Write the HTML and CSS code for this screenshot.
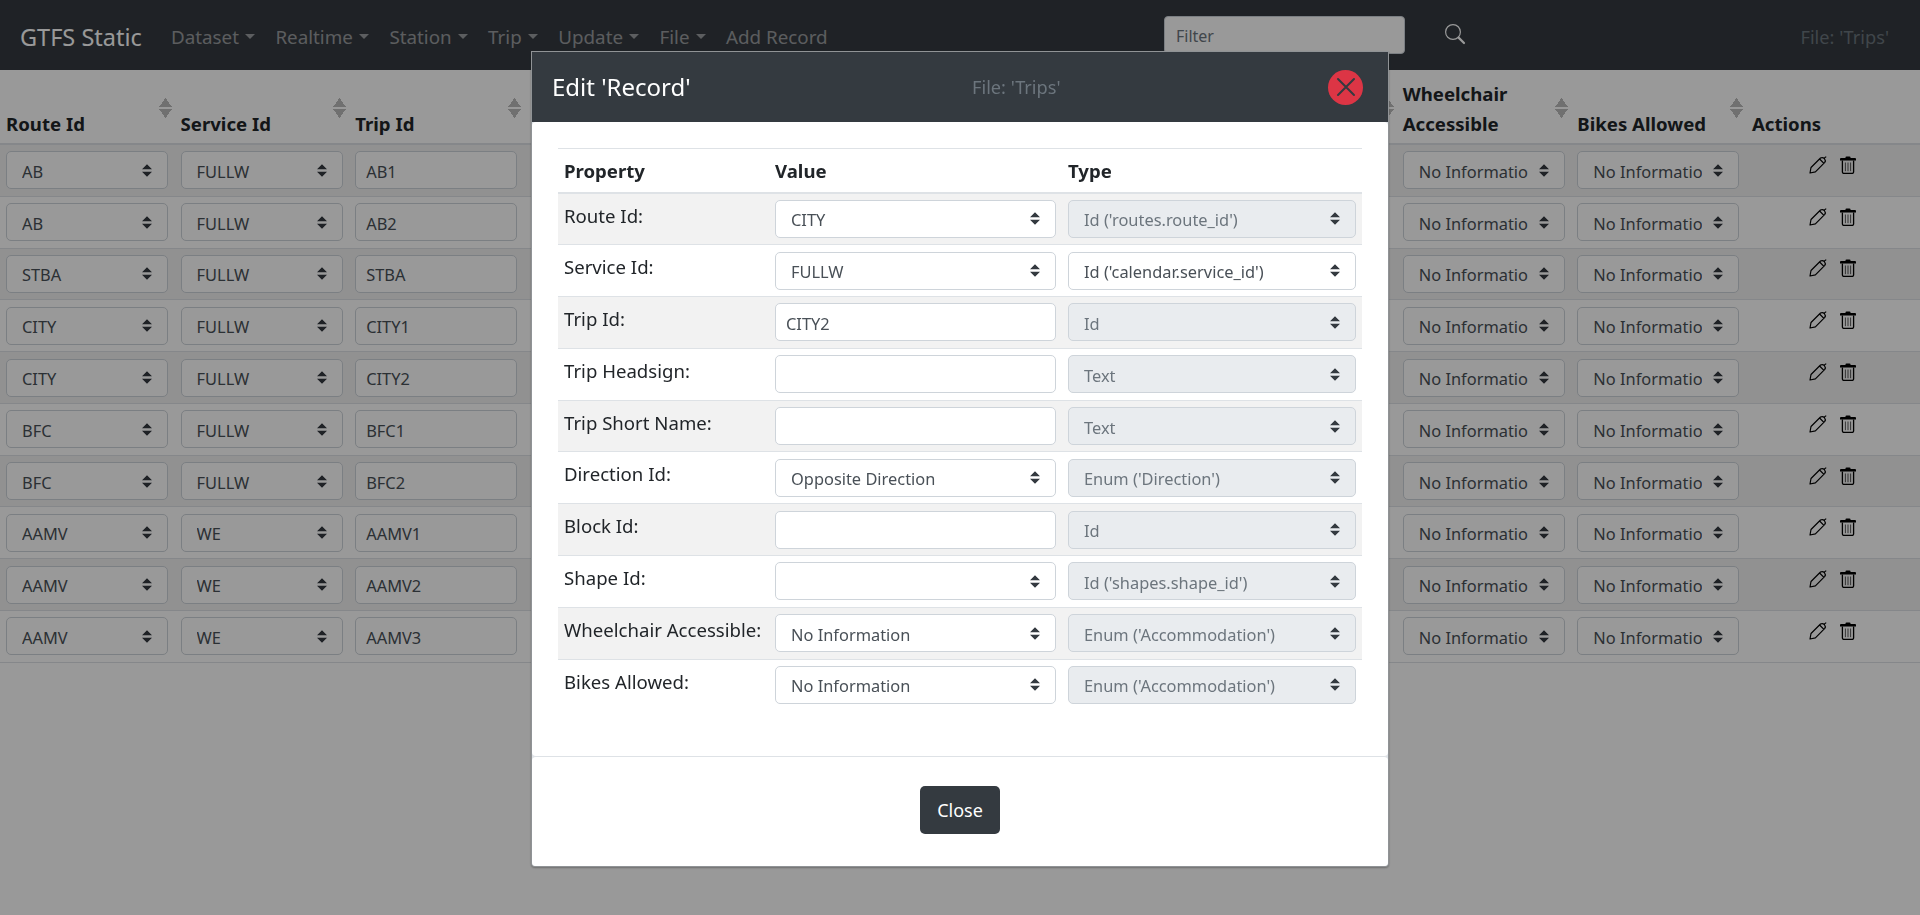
FILE: index.html
```html
<!DOCTYPE html>
<html lang="en">
<head>
  <meta charset="UTF-8">
  <title>GTFS Static</title>
  <link rel="stylesheet" href="styles.css">
</head>
<body>
  <svg class="sprites" width="0" height="0">
    <symbol id="icon-pen" viewBox="0 0 18 18">
      <path d="M1 17 L2 11.5 L11.5 2 Q13.5 0.8 15.4 2.6 Q17 4.6 15.8 6.4 L6.4 15.8 Z M10.6 3 L14.9 7.3 M15 2.4 L17.2 0.6" fill="none" stroke="currentColor" stroke-width="1.2" stroke-linejoin="round"/>
    </symbol>
    <symbol id="icon-trash" viewBox="0 0 16 18">
      <path d="M5.5 1.2 Q5.5 .4 6.5 .4 H9.5 Q10.5 .4 10.5 1.2 V2 H15 Q16 2 16 3 V4.4 H0 V3 Q0 2 1 2 H5.5 Z"/>
      <path d="M2.4 4.4 V16 Q2.4 17.4 3.8 17.4 H12.2 Q13.6 17.4 13.6 16 V4.4" fill="none" stroke="currentColor" stroke-width="1.3"/>
      <path d="M5.4 6.5 V15.2 M8 6.5 V15.2 M10.6 6.5 V15.2" fill="none" stroke="currentColor" stroke-width="1" opacity=".65"/>
    </symbol>
  </svg>

  <nav class="navbar">
    <a class="brand">GTFS Static</a>
    <ul class="nav-list">
      <li class="nav-link dropdown">Dataset</li>
      <li class="nav-link dropdown">Realtime</li>
      <li class="nav-link dropdown">Station</li>
      <li class="nav-link dropdown">Trip</li>
      <li class="nav-link dropdown">Update</li>
      <li class="nav-link dropdown">File</li>
      <li class="nav-link">Add Record</li>
    </ul>
    <input class="filter" type="text" placeholder="Filter">
    <svg class="search-icon" width="22" height="22" viewBox="0 0 22 22">
      <circle cx="9" cy="9" r="7.4" fill="none" stroke="currentColor" stroke-width="1.2"/>
      <path d="M14.6 14.6 L20 20" stroke="currentColor" stroke-width="2.2" stroke-linecap="round"/>
    </svg>
    <span class="nav-file">File: 'Trips'</span>
  </nav>

  <table class="records">
    <colgroup>
      <col class="col-data"><col class="col-data"><col class="col-data"><col class="col-data"><col class="col-data">
      <col class="col-data"><col class="col-data"><col class="col-data"><col class="col-data"><col class="col-data">
      <col>
    </colgroup>
    <thead>
      <tr>
        <th><div class="th-inner"><span>Route Id</span><i class="sort"></i></div></th>
        <th><div class="th-inner"><span>Service Id</span><i class="sort"></i></div></th>
        <th><div class="th-inner"><span>Trip Id</span><i class="sort"></i></div></th>
        <th></th><th></th><th></th><th></th>
        <th><div class="th-inner"><span></span><i class="sort"></i></div></th>
        <th><div class="th-inner"><span>Wheelchair Accessible</span><i class="sort"></i></div></th>
        <th><div class="th-inner"><span>Bikes Allowed</span><i class="sort"></i></div></th>
        <th><div class="th-inner"><span>Actions</span></div></th>
      </tr>
    </thead>
    <tbody>
      <tr>
        <td><select class="field"><option>AB</option></select></td>
        <td><select class="field"><option>FULLW</option></select></td>
        <td><input class="field" type="text" value="AB1"></td>
        <td></td><td></td><td></td><td></td><td></td>
        <td><select class="field"><option>No Information</option></select></td>
        <td><select class="field"><option>No Information</option></select></td>
        <td class="actions"><svg class="pen"><use href="#icon-pen"/></svg><svg class="trash"><use href="#icon-trash"/></svg></td>
      </tr>
      <tr>
        <td><select class="field"><option>AB</option></select></td>
        <td><select class="field"><option>FULLW</option></select></td>
        <td><input class="field" type="text" value="AB2"></td>
        <td></td><td></td><td></td><td></td><td></td>
        <td><select class="field"><option>No Information</option></select></td>
        <td><select class="field"><option>No Information</option></select></td>
        <td class="actions"><svg class="pen"><use href="#icon-pen"/></svg><svg class="trash"><use href="#icon-trash"/></svg></td>
      </tr>
      <tr>
        <td><select class="field"><option>STBA</option></select></td>
        <td><select class="field"><option>FULLW</option></select></td>
        <td><input class="field" type="text" value="STBA"></td>
        <td></td><td></td><td></td><td></td><td></td>
        <td><select class="field"><option>No Information</option></select></td>
        <td><select class="field"><option>No Information</option></select></td>
        <td class="actions"><svg class="pen"><use href="#icon-pen"/></svg><svg class="trash"><use href="#icon-trash"/></svg></td>
      </tr>
      <tr>
        <td><select class="field"><option>CITY</option></select></td>
        <td><select class="field"><option>FULLW</option></select></td>
        <td><input class="field" type="text" value="CITY1"></td>
        <td></td><td></td><td></td><td></td><td></td>
        <td><select class="field"><option>No Information</option></select></td>
        <td><select class="field"><option>No Information</option></select></td>
        <td class="actions"><svg class="pen"><use href="#icon-pen"/></svg><svg class="trash"><use href="#icon-trash"/></svg></td>
      </tr>
      <tr>
        <td><select class="field"><option>CITY</option></select></td>
        <td><select class="field"><option>FULLW</option></select></td>
        <td><input class="field" type="text" value="CITY2"></td>
        <td></td><td></td><td></td><td></td><td></td>
        <td><select class="field"><option>No Information</option></select></td>
        <td><select class="field"><option>No Information</option></select></td>
        <td class="actions"><svg class="pen"><use href="#icon-pen"/></svg><svg class="trash"><use href="#icon-trash"/></svg></td>
      </tr>
      <tr>
        <td><select class="field"><option>BFC</option></select></td>
        <td><select class="field"><option>FULLW</option></select></td>
        <td><input class="field" type="text" value="BFC1"></td>
        <td></td><td></td><td></td><td></td><td></td>
        <td><select class="field"><option>No Information</option></select></td>
        <td><select class="field"><option>No Information</option></select></td>
        <td class="actions"><svg class="pen"><use href="#icon-pen"/></svg><svg class="trash"><use href="#icon-trash"/></svg></td>
      </tr>
      <tr>
        <td><select class="field"><option>BFC</option></select></td>
        <td><select class="field"><option>FULLW</option></select></td>
        <td><input class="field" type="text" value="BFC2"></td>
        <td></td><td></td><td></td><td></td><td></td>
        <td><select class="field"><option>No Information</option></select></td>
        <td><select class="field"><option>No Information</option></select></td>
        <td class="actions"><svg class="pen"><use href="#icon-pen"/></svg><svg class="trash"><use href="#icon-trash"/></svg></td>
      </tr>
      <tr>
        <td><select class="field"><option>AAMV</option></select></td>
        <td><select class="field"><option>WE</option></select></td>
        <td><input class="field" type="text" value="AAMV1"></td>
        <td></td><td></td><td></td><td></td><td></td>
        <td><select class="field"><option>No Information</option></select></td>
        <td><select class="field"><option>No Information</option></select></td>
        <td class="actions"><svg class="pen"><use href="#icon-pen"/></svg><svg class="trash"><use href="#icon-trash"/></svg></td>
      </tr>
      <tr>
        <td><select class="field"><option>AAMV</option></select></td>
        <td><select class="field"><option>WE</option></select></td>
        <td><input class="field" type="text" value="AAMV2"></td>
        <td></td><td></td><td></td><td></td><td></td>
        <td><select class="field"><option>No Information</option></select></td>
        <td><select class="field"><option>No Information</option></select></td>
        <td class="actions"><svg class="pen"><use href="#icon-pen"/></svg><svg class="trash"><use href="#icon-trash"/></svg></td>
      </tr>
      <tr>
        <td><select class="field"><option>AAMV</option></select></td>
        <td><select class="field"><option>WE</option></select></td>
        <td><input class="field" type="text" value="AAMV3"></td>
        <td></td><td></td><td></td><td></td><td></td>
        <td><select class="field"><option>No Information</option></select></td>
        <td><select class="field"><option>No Information</option></select></td>
        <td class="actions"><svg class="pen"><use href="#icon-pen"/></svg><svg class="trash"><use href="#icon-trash"/></svg></td>
      </tr>
    </tbody>
  </table>

  <div class="backdrop"></div>

  <div class="modal">
    <div class="modal-header">
      <h5 class="modal-title">Edit 'Record'</h5>
      <span class="modal-file">File: 'Trips'</span>
      <button class="modal-close">
        <svg width="20" height="20" viewBox="0 0 20 20"><path d="M2 2 L18 18 M18 2 L2 18" stroke="currentColor" stroke-width="2" stroke-linecap="round"/></svg>
      </button>
    </div>
    <div class="modal-body">
      <table class="props">
        <colgroup><col class="col-prop"><col class="col-value"><col></colgroup>
        <thead>
          <tr><th>Property</th><th>Value</th><th>Type</th></tr>
        </thead>
        <tbody>
          <tr>
            <td class="prop-name">Route Id:</td>
            <td><select class="field"><option>CITY</option></select></td>
            <td><select class="field" disabled><option>Id ('routes.route_id')</option></select></td>
          </tr>
          <tr>
            <td class="prop-name">Service Id:</td>
            <td><select class="field"><option>FULLW</option></select></td>
            <td><select class="field"><option>Id ('calendar.service_id')</option></select></td>
          </tr>
          <tr>
            <td class="prop-name">Trip Id:</td>
            <td><input class="field" type="text" value="CITY2"></td>
            <td><select class="field" disabled><option>Id</option></select></td>
          </tr>
          <tr>
            <td class="prop-name">Trip Headsign:</td>
            <td><input class="field" type="text"></td>
            <td><select class="field" disabled><option>Text</option></select></td>
          </tr>
          <tr>
            <td class="prop-name">Trip Short Name:</td>
            <td><input class="field" type="text"></td>
            <td><select class="field" disabled><option>Text</option></select></td>
          </tr>
          <tr>
            <td class="prop-name">Direction Id:</td>
            <td><select class="field"><option>Opposite Direction</option></select></td>
            <td><select class="field" disabled><option>Enum ('Direction')</option></select></td>
          </tr>
          <tr>
            <td class="prop-name">Block Id:</td>
            <td><input class="field" type="text"></td>
            <td><select class="field" disabled><option>Id</option></select></td>
          </tr>
          <tr>
            <td class="prop-name">Shape Id:</td>
            <td><select class="field"><option></option></select></td>
            <td><select class="field" disabled><option>Id ('shapes.shape_id')</option></select></td>
          </tr>
          <tr>
            <td class="prop-name">Wheelchair Accessible:</td>
            <td><select class="field"><option>No Information</option></select></td>
            <td><select class="field" disabled><option>Enum ('Accommodation')</option></select></td>
          </tr>
          <tr>
            <td class="prop-name">Bikes Allowed:</td>
            <td><select class="field"><option>No Information</option></select></td>
            <td><select class="field" disabled><option>Enum ('Accommodation')</option></select></td>
          </tr>
        </tbody>
      </table>
    </div>
    <div class="modal-footer">
      <button class="btn-close">Close</button>
    </div>
  </div>
</body>
</html>
```

FILE: styles.css
```css
* {
  box-sizing: border-box;
}

body {
  margin: 0;
  height: 915px;
  overflow: hidden;
  background-color: #fff;
  color: #212529;
  font-family: "Noto Sans", "Open Sans", sans-serif;
  font-size: 16px;
  line-height: 24px;
}

.sprites {
  position: absolute;
}

/* navbar */
.navbar {
  display: flex;
  align-items: center;
  height: 70px;
  padding: 4px 31px 0 20px;
  background-color: #343a40;
}

.brand {
  width: 151px;
  font-size: 23.5px;
  color: #fff;
}

.nav-list {
  display: flex;
  width: 993px;
  margin: 0;
  padding: 0;
  list-style: none;
}

.nav-link {
  margin-right: 20.5px;
  font-size: 18.8px;
  color: rgba(255, 255, 255, .5);
}

.dropdown::after {
  content: "";
  display: inline-block;
  margin-left: 6px;
  vertical-align: 5px;
  border-top: 5px solid;
  border-left: 5.5px solid transparent;
  border-right: 5.5px solid transparent;
}

.filter {
  width: 241px;
  height: 38px;
  margin-top: -4px;
  padding: 2px 11px 0;
  border: 1px solid #ced4da;
  border-radius: 4px;
  background-color: #fff;
  font: inherit;
}

.filter::placeholder {
  color: #6c757d;
}

.search-icon {
  margin: -6px 0 0 39px;
  color: #fff;
}

.nav-file {
  margin-left: auto;
  font-size: 18.2px;
  color: #6c757d;
}

/* form controls */
.field {
  display: block;
  width: 100%;
  height: 38px;
  padding: 2px 36px 0 15px;
  border: 1px solid #ced4da;
  border-radius: 5px;
  background-color: #fff;
  color: #495057;
  font-family: inherit;
  font-size: 16.4px;
  appearance: none;
}

select.field {
  background-image: url("data:image/svg+xml,%3csvg xmlns='http://www.w3.org/2000/svg' viewBox='0 0 4 5'%3e%3cpath fill='%23343a40' d='M2 0L0 2h4zm0 5L0 3h4z'/%3e%3c/svg%3e");
  background-repeat: no-repeat;
  background-position: right 15px center;
  background-size: 10px 13px;
}

select.field:disabled {
  background-color: #e9ecef;
  color: #6c757d;
  opacity: 1;
}

input.field {
  padding: 2px 10px 0;
}

/* main table */
.records {
  width: 100%;
  border-collapse: collapse;
  table-layout: fixed;
}

.col-data {
  width: 174.6px;
}

.records th {
  height: 74px;
  padding: 0 3px 4px 6px;
  border-bottom: 2px solid #dee2e6;
  font-size: 18.6px;
  line-height: 30px;
  font-weight: 700;
  text-align: left;
  vertical-align: bottom;
}

.th-inner {
  display: flex;
  align-items: flex-end;
  justify-content: space-between;
}

.sort {
  flex: none;
  display: block;
  margin-bottom: 21px;
  width: 13px;
  height: 20px;
  background:
    conic-gradient(from 144deg at 50% 0, #bbb 72deg, transparent 0) top / 13px 9px no-repeat,
    conic-gradient(from -36deg at 50% 100%, #bbb 72deg, transparent 0) bottom / 13px 9px no-repeat;
}

.records td {
  padding: 6.4px 6.7px 6.4px 6px;
  border-bottom: 1px solid #dee2e6;
}

.records tbody tr:nth-child(odd) {
  background-color: rgba(0, 0, 0, .05);
}

.records .actions {
  padding: 0 0 5px;
  text-align: center;
  color: #000;
}

.pen {
  width: 18px;
  height: 18px;
  margin-right: 13px;
}

.trash {
  width: 16px;
  height: 18px;
  fill: currentColor;
}

/* the dialog */
.backdrop {
  position: fixed;
  inset: 0;
  background-color: rgba(0, 0, 0, .4);
}

.modal {
  position: fixed;
  top: 51px;
  left: 0;
  right: 0;
  width: 858px;
  margin: 0 auto;
  border: 1px solid rgba(0, 0, 0, .35);
  border-radius: 0 0 4px 4px;
  background-color: #dee2e6;
  box-shadow: 0 1px 2px rgba(0, 0, 0, .3);
}

.modal-header {
  display: flex;
  align-items: center;
  height: 70px;
  padding: 0 25px 0 20px;
  background-color: #343a40;
}

.modal-title {
  width: 420px;
  margin: 0;
  font-size: 24px;
  line-height: 36px;
  font-weight: 400;
  color: #fff;
}

.modal-file {
  font-size: 18.2px;
  color: #6c757d;
}

.modal-close {
  display: flex;
  align-items: center;
  justify-content: center;
  width: 35px;
  height: 35px;
  margin-left: auto;
  padding: 0;
  border: none;
  border-radius: 50%;
  background-color: #dc3545;
  color: #343a40;
}

.modal-body {
  padding: 26px 26px 46px;
  border-radius: 4px;
  background-color: #fff;
}

.props {
  width: 100%;
  border-collapse: collapse;
  table-layout: fixed;
}

.col-prop {
  width: 211px;
}

.col-value {
  width: 293px;
}

.props th {
  height: 44px;
  padding: 2px 6px 0;
  border-top: 1px solid #dee2e6;
  border-bottom: 2px solid #dee2e6;
  font-size: 18.6px;
  font-weight: 700;
  text-align: left;
}

.props td {
  padding: 6.4px 6px;
  border-bottom: 1px solid #dee2e6;
  vertical-align: top;
}

.props tbody tr:nth-child(odd) {
  background-color: #f2f2f2;
}

.props tbody tr:last-child td {
  border-bottom: none;
}

.props .prop-name {
  padding-top: 10px;
  font-size: 18.6px;
  white-space: nowrap;
}

.modal-footer {
  display: flex;
  justify-content: center;
  padding: 29px 0 32px;
  border-top: 1px solid #dee2e6;
  border-radius: 4px;
  background-color: #fff;
}

.btn-close {
  width: 80px;
  height: 48px;
  border: none;
  border-radius: 5px;
  background-color: #343a40;
  color: #fff;
  font-family: inherit;
  font-size: 18px;
}
```
